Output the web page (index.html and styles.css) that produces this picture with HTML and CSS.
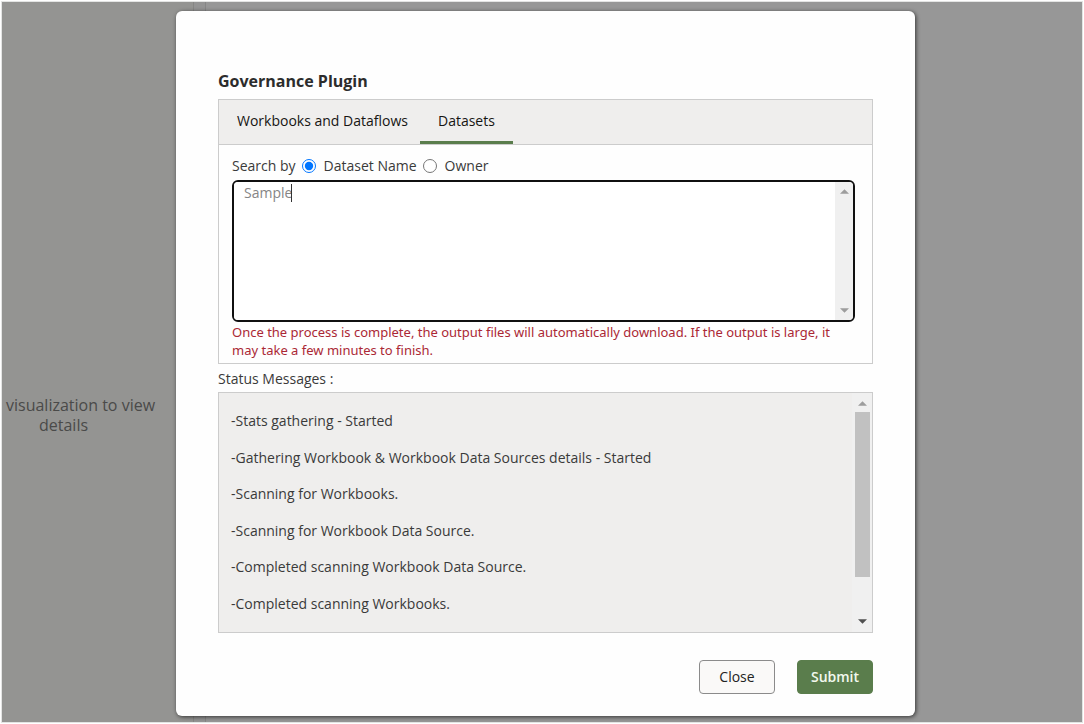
FILE: index.html
```html
<!DOCTYPE html>
<html lang="en">
<head>
<meta charset="utf-8">
<meta name="viewport" content="width=device-width, initial-scale=1">
<title>Governance Plugin</title>
<link rel="stylesheet" href="styles.css">
</head>
<body>
<div class="page">
  <aside class="canvas-side">
    <p class="canvas-hint">visualization to view <span class="canvas-hint-end">details</span></p>
  </aside>
  <main class="dialog" role="dialog" aria-labelledby="dialog-title">
    <h1 class="dialog-title" id="dialog-title">Governance Plugin</h1>
    <section class="panel">
      <div class="tabs" role="tablist">
        <button class="tab" type="button" role="tab" aria-selected="false">Workbooks and Dataflows</button>
        <button class="tab tab-active" type="button" role="tab" aria-selected="true">Datasets</button>
      </div>
      <div class="panel-body">
        <div class="search-by" role="radiogroup" aria-labelledby="search-label">
          <span id="search-label">Search by</span>
          <input class="radio" type="radio" name="by" id="by-name" checked>
          <label for="by-name">Dataset Name</label>
          <input class="radio" type="radio" name="by" id="by-owner">
          <label for="by-owner">Owner</label>
        </div>
        <div class="search-box">
          <textarea class="search-text" aria-label="Search text">Sample</textarea>
          <span class="caret"></span>
          <div class="scrollbar">
            <svg class="arrow" viewBox="0 0 10 5"><path d="M0 5 5 0 10 5Z"/></svg>
            <svg class="arrow" viewBox="0 0 10 5"><path d="M0 0H10L5 5Z"/></svg>
          </div>
        </div>
        <p class="notice">Once the process is complete, the output files will automatically download. If the output is large, it may take a few minutes to finish.</p>
      </div>
    </section>
    <h2 class="status-title">Status Messages :</h2>
    <div class="status">
      <ul class="messages">
        <li>-Stats gathering - Started</li>
        <li>-Gathering Workbook &amp; Workbook Data Sources details - Started</li>
        <li>-Scanning for Workbooks.</li>
        <li>-Scanning for Workbook Data Source.</li>
        <li>-Completed scanning Workbook Data Source.</li>
        <li>-Completed scanning Workbooks.</li>
      </ul>
      <div class="scrollbar status-scrollbar">
        <svg class="arrow" viewBox="0 0 10 5"><path d="M0 5 5 0 10 5Z"/></svg>
        <div class="thumb"></div>
        <svg class="arrow arrow-dark" viewBox="0 0 10 5"><path d="M0 0H10L5 5Z"/></svg>
      </div>
    </div>
    <footer class="actions">
      <button class="button" type="button">Close</button>
      <button class="button button-primary" type="button">Submit</button>
    </footer>
  </main>
</div>
</body>
</html>
```
FILE: styles.css
```css
* { box-sizing: border-box; }

body {
  margin: 0;
  padding: 1px;
  background: #fff;
  color: #3a3a3a;
  font: 14px/20px "Open Sans", "Noto Sans", sans-serif;
}

button, textarea { font: inherit; }

.page {
  display: grid;
  grid-template-columns: 174px minmax(0, 1fr) 167px;
  min-height: calc(100vh - 2px);
  border: 1px solid #e3e4e3;
  background: linear-gradient(90deg, #949492 0 191px, #868684 191px 192px, #949494 192px 203px, #868686 203px 204px, #979797 204px);
}

.canvas-side {
  display: flex;
  align-items: flex-start;
  padding: 393px 0 0 4px;
}

.canvas-hint {
  margin: 0;
  color: #4a4a49;
  font-size: 16px;
  line-height: 20px;
  white-space: nowrap;
  text-align: center;
}

.canvas-hint-end {
  display: block;
  padding-right: 34px;
}

.dialog {
  display: flex;
  flex-direction: column;
  margin: 9px 0 6px;
  padding: 60px 42px 22px;
  border-radius: 6px;
  background: #fefefe;
  box-shadow: 1px 1px 4px rgba(0, 0, 0, 0.65);
}

.dialog-title {
  margin: 0 0 8px;
  color: #2c2c2c;
  font-size: 16px;
  line-height: 20px;
}

.panel {
  border: 1px solid #ccc;
}

.tabs {
  display: flex;
  height: 45px;
  border-bottom: 1px solid #ccc;
  background: #efeeed;
}

.tab {
  height: 44px;
  padding: 0 12px 0 18px;
  border: 0;
  border-bottom: 3px solid transparent;
  background: none;
  color: #161513;
}

.tab-active {
  padding-right: 18px;
  border-bottom-color: #5a7d4c;
}

.panel-body { padding: 11px 17px 4px 13px; }

.search-by {
  display: flex;
  align-items: center;
  height: 20px;
  margin-bottom: 4px;
}

.radio {
  width: 14px;
  height: 14px;
  margin: 0 8px 0 6px;
}

.search-box {
  position: relative;
  display: flex;
  height: 142px;
  overflow: hidden;
  border: 2px solid #101010;
  border-radius: 6px;
}

.search-text {
  flex: 1;
  min-width: 0;
  padding: 1px 10px;
  overflow: hidden;
  border: 0;
  outline: 0;
  resize: none;
  background: #fff;
  color: #858585;
}

.caret {
  position: absolute;
  top: 2px;
  left: 57px;
  width: 1px;
  height: 18px;
  background: #333;
}

.scrollbar {
  display: flex;
  flex-direction: column;
  justify-content: space-between;
  align-items: center;
  width: 18px;
  padding: 7px 0;
  background: #f0f0f0;
}

.arrow {
  width: 9px;
  height: 5px;
  fill: #9d9d9d;
}

.arrow-dark { fill: #505050; }

.notice {
  margin: 1px 0 0;
  color: #ab2835;
  font-family: "Noto Sans", sans-serif;
  font-size: 13px;
  line-height: 18px;
}

.status-title {
  margin: 5px 0 3px;
  font-size: 14px;
  font-weight: 400;
  line-height: 20px;
}

.status {
  display: flex;
  height: 241px;
  border: 1px solid #ccc;
  background: #efeeed;
}

.messages {
  display: flex;
  flex: 1;
  flex-direction: column;
  justify-content: space-between;
  margin: 0;
  padding: 18px 12px;
  list-style: none;
}

.status-scrollbar {
  justify-content: flex-start;
  width: 20px;
  padding: 8px 0;
}

.thumb {
  width: 15px;
  height: 165px;
  margin: 6px 0 auto;
  background: #c1c1c1;
}

.actions {
  display: flex;
  justify-content: flex-end;
  gap: 22px;
  margin-top: 27px;
}

.button {
  width: 76px;
  height: 34px;
  padding: 0;
  border: 1px solid #8b8b8b;
  border-radius: 4px;
  background: #faf9f8;
  color: #222;
}

.button-primary {
  border-color: #5a7d4c;
  background: #5a7d4c;
  color: #f2f8ee;
  font-weight: 600;
}
```
